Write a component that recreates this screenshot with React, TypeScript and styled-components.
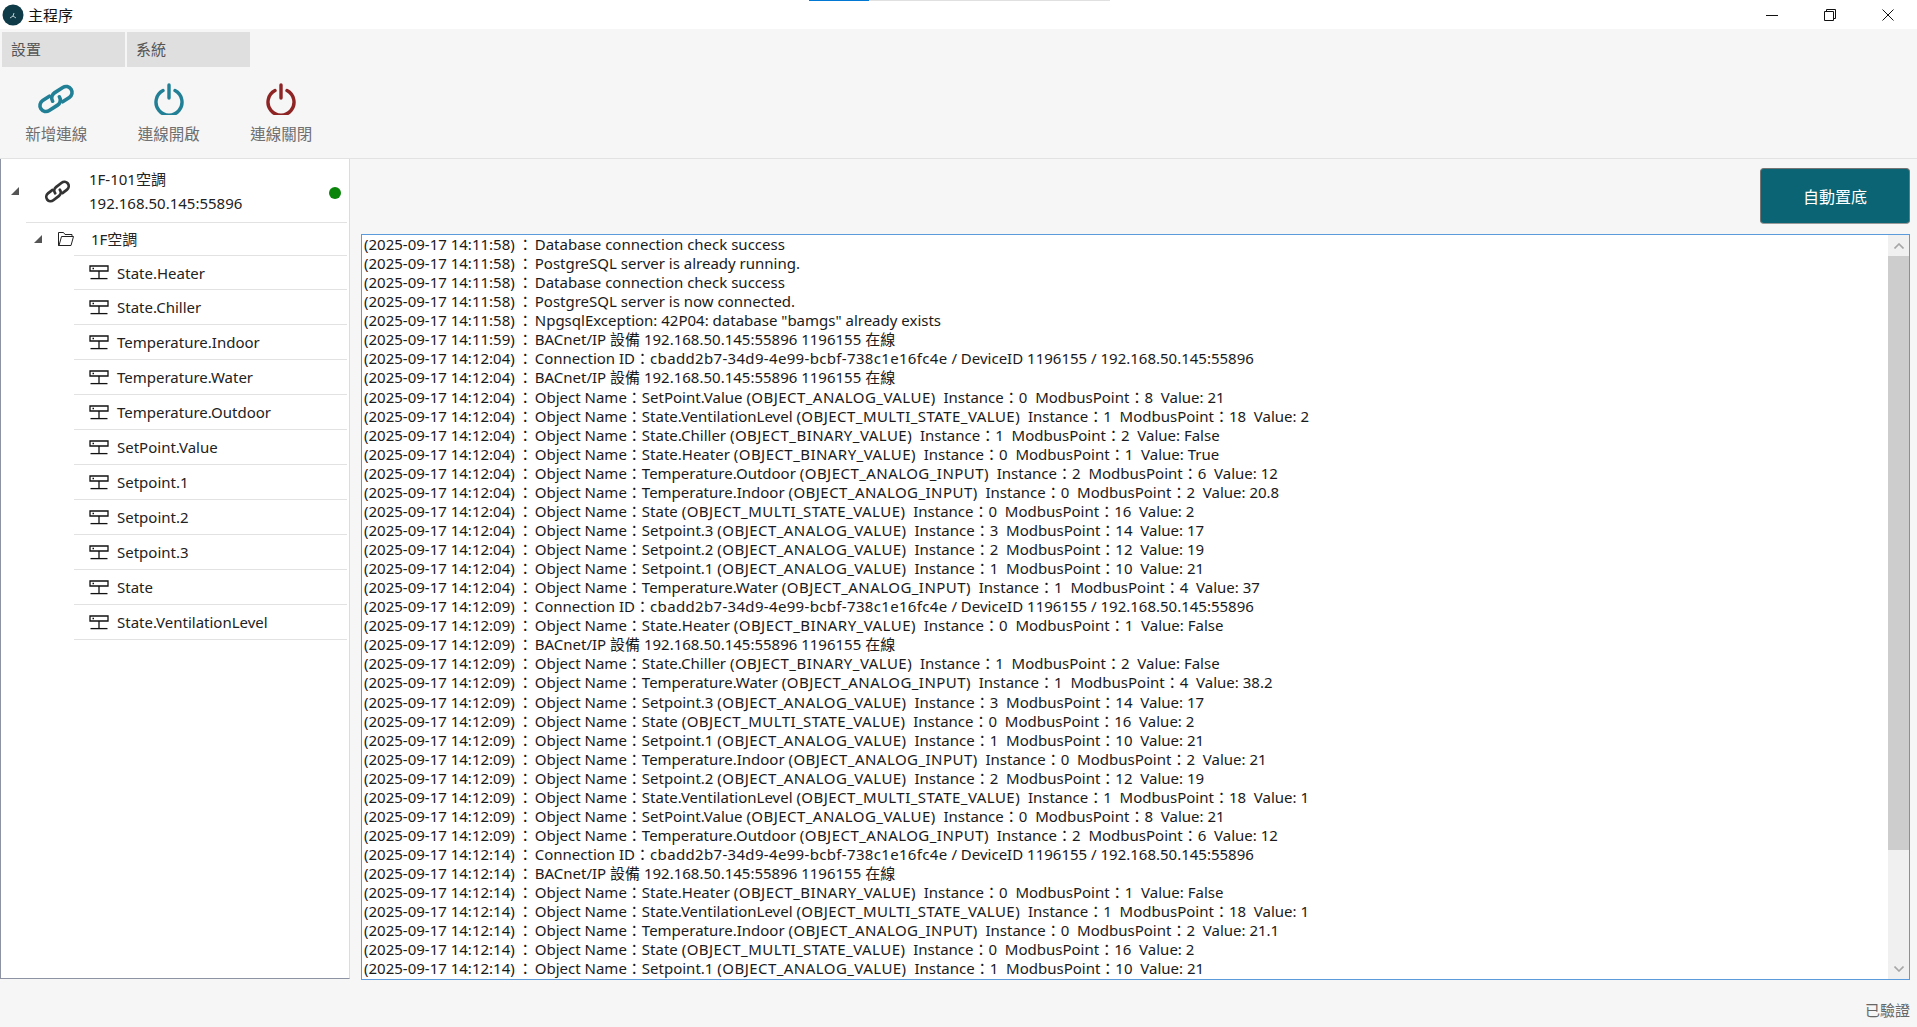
import { createGlobalStyle, styled } from "styled-components";

const GlobalStyle = createGlobalStyle`
  html, body {
    margin: 0;
    padding: 0;
    height: 100%;
    overflow: hidden;
    background: #f6f6f6;
    font-family: "Noto Sans", "Noto Sans CJK TC", sans-serif;
  }
`;

const treeItems = [
  "State.Heater",
  "State.Chiller",
  "Temperature.Indoor",
  "Temperature.Water",
  "Temperature.Outdoor",
  "SetPoint.Value",
  "Setpoint.1",
  "Setpoint.2",
  "Setpoint.3",
  "State",
  "State.VentilationLevel",
];

const conn = "Connection ID：cbadd2b7-34d9-4e99-bcbf-738c1e16fc4e / DeviceID 1196155 / 192.168.50.145:55896";
const online = (tail: string) => `BACnet/IP 設備 192.168.50.145:55896 1196155 ${tail}`;
const obj = (name: string, type: string, inst: number, point: number, value: string) =>
  `Object Name：${name} (OBJECT_${type})  Instance：${inst}  ModbusPoint：${point}  Value: ${value}`;

const logLines: [string, string][] = [
  ["14:11:58", "Database connection check success"],
  ["14:11:58", "PostgreSQL server is already running."],
  ["14:11:58", "Database connection check success"],
  ["14:11:58", "PostgreSQL server is now connected."],
  ["14:11:58", 'NpgsqlException: 42P04: database "bamgs" already exists'],
  ["14:11:59", online("在線")],
  ["14:12:04", conn],
  ["14:12:04", online("在線")],
  ["14:12:04", obj("SetPoint.Value", "ANALOG_VALUE", 0, 8, "21")],
  ["14:12:04", obj("State.VentilationLevel", "MULTI_STATE_VALUE", 1, 18, "2")],
  ["14:12:04", obj("State.Chiller", "BINARY_VALUE", 1, 2, "False")],
  ["14:12:04", obj("State.Heater", "BINARY_VALUE", 0, 1, "True")],
  ["14:12:04", obj("Temperature.Outdoor", "ANALOG_INPUT", 2, 6, "12")],
  ["14:12:04", obj("Temperature.Indoor", "ANALOG_INPUT", 0, 2, "20.8")],
  ["14:12:04", obj("State", "MULTI_STATE_VALUE", 0, 16, "2")],
  ["14:12:04", obj("Setpoint.3", "ANALOG_VALUE", 3, 14, "17")],
  ["14:12:04", obj("Setpoint.2", "ANALOG_VALUE", 2, 12, "19")],
  ["14:12:04", obj("Setpoint.1", "ANALOG_VALUE", 1, 10, "21")],
  ["14:12:04", obj("Temperature.Water", "ANALOG_INPUT", 1, 4, "37")],
  ["14:12:09", conn],
  ["14:12:09", obj("State.Heater", "BINARY_VALUE", 0, 1, "False")],
  ["14:12:09", online("在線")],
  ["14:12:09", obj("State.Chiller", "BINARY_VALUE", 1, 2, "False")],
  ["14:12:09", obj("Temperature.Water", "ANALOG_INPUT", 1, 4, "38.2")],
  ["14:12:09", obj("Setpoint.3", "ANALOG_VALUE", 3, 14, "17")],
  ["14:12:09", obj("State", "MULTI_STATE_VALUE", 0, 16, "2")],
  ["14:12:09", obj("Setpoint.1", "ANALOG_VALUE", 1, 10, "21")],
  ["14:12:09", obj("Temperature.Indoor", "ANALOG_INPUT", 0, 2, "21")],
  ["14:12:09", obj("Setpoint.2", "ANALOG_VALUE", 2, 12, "19")],
  ["14:12:09", obj("State.VentilationLevel", "MULTI_STATE_VALUE", 1, 18, "1")],
  ["14:12:09", obj("SetPoint.Value", "ANALOG_VALUE", 0, 8, "21")],
  ["14:12:09", obj("Temperature.Outdoor", "ANALOG_INPUT", 2, 6, "12")],
  ["14:12:14", conn],
  ["14:12:14", online("在線")],
  ["14:12:14", obj("State.Heater", "BINARY_VALUE", 0, 1, "False")],
  ["14:12:14", obj("State.VentilationLevel", "MULTI_STATE_VALUE", 1, 18, "1")],
  ["14:12:14", obj("Temperature.Indoor", "ANALOG_INPUT", 0, 2, "21.1")],
  ["14:12:14", obj("State", "MULTI_STATE_VALUE", 0, 16, "2")],
  ["14:12:14", obj("Setpoint.1", "ANALOG_VALUE", 1, 10, "21")],
];

// the object type and the connection guid run wider in the original font
const widePart = /(\(OBJECT_[A-Z_]+\)|[0-9a-f]{8}-[0-9a-f-]+)/;

const LinkIcon = ({ size, color, weight, angle }: { size: number; color: string; weight: number; angle: number }) => (
  <svg width={size} height={size} viewBox="0 0 40 40" fill="none" stroke={color} strokeWidth={weight} strokeLinecap="round">
    <g transform={`rotate(${angle} 20 20)`}>
      <path d="M16 14H8a6 6 0 0 0 0 12h10a6 6 0 0 0 6-6" />
      <path d="M24 26h8a6 6 0 0 0 0-12H22a6 6 0 0 0-6 6" />
    </g>
  </svg>
);

const PowerIcon = ({ color }: { color: string }) => (
  <svg width="32" height="32" viewBox="0 0 32 32" fill="none" stroke={color} strokeWidth="3.4" strokeLinecap="round">
    <path d="M10 7.6a13 13 0 1 0 12 0" />
    <path d="M16 2v13" />
  </svg>
);

const FolderIcon = () => (
  <svg width="18" height="16" viewBox="0 0 18 16" fill="none" stroke="#222" strokeWidth="1">
    <path d="M1.5 14.5V1.5h5l1.5 2h7v2" />
    <path d="M1.5 14.5h12.5l2.5-9h-12l-2.5 9z" />
  </svg>
);

const NodeIcon = () => (
  <svg width="20" height="15" viewBox="0 0 20 15" fill="none" stroke="#111" strokeWidth="1.3">
    <path d="M1 1h18v5H1z" />
    <path d="M3.5 3.5h1.5" />
    <path d="M10 6v7" />
    <path d="M1.5 13.6h17" />
  </svg>
);

const AppLogo = () => (
  <svg width="22" height="22" viewBox="0 0 22 22">
    <circle cx="11" cy="11" r="10.5" fill="#0f3a47" />
    <path d="M8 14l3-2 1-3M11 12l3 2" stroke="#cfe0e4" strokeWidth="0.9" fill="none" />
  </svg>
);

const Caret = () => (
  <svg width="8" height="8" viewBox="0 0 8 8">
    <path d="M8 0v8H0z" fill="#555" />
  </svg>
);

const Chevron = ({ up }: { up?: boolean }) => (
  <svg width="10" height="6" viewBox="0 0 10 6" fill="none" stroke="#a6a6a6" strokeWidth="1.6">
    <path d={up ? "M.5 5.5L5 1l4.5 4.5" : "M.5.5L5 5l4.5-4.5"} />
  </svg>
);

export default function App() {
  return (
    <Page>
      <GlobalStyle />
      <ShareBar>
        <ShareProgress />
      </ShareBar>
      <TitleBar>
        <AppLogo />
        <TitleText>主程序</TitleText>
        <WindowButtons>
          <WindowButton>
            <svg width="12" height="12" viewBox="0 0 12 12" stroke="#111" fill="none">
              <path d="M0 6.5h12" />
            </svg>
          </WindowButton>
          <WindowButton>
            <svg width="12" height="12" viewBox="0 0 12 12" stroke="#111" fill="none">
              <path d="M.5 2.5h9v9h-9z" />
              <path d="M2.5 2.5v-2h9v9h-2" />
            </svg>
          </WindowButton>
          <WindowButton>
            <svg width="12" height="12" viewBox="0 0 12 12" stroke="#111" fill="none">
              <path d="M.5.5l11 11M11.5.5l-11 11" />
            </svg>
          </WindowButton>
        </WindowButtons>
      </TitleBar>

      <MenuBar>
        <MenuTab>設置</MenuTab>
        <MenuTab>系統</MenuTab>
      </MenuBar>

      <Toolbar>
        <ToolButton>
          <ToolIcon>
            <LinkIcon size={40} color="#217f96" weight={3.6} angle={-33} />
          </ToolIcon>
          <ToolLabel>新增連線</ToolLabel>
        </ToolButton>
        <ToolButton>
          <ToolIcon>
            <PowerIcon color="#217f96" />
          </ToolIcon>
          <ToolLabel>連線開啟</ToolLabel>
        </ToolButton>
        <ToolButton>
          <ToolIcon>
            <PowerIcon color="#8e2424" />
          </ToolIcon>
          <ToolLabel>連線關閉</ToolLabel>
        </ToolButton>
      </Toolbar>

      <Main>
        <TreePanel>
          <RootRow>
            <CaretSlot>
              <Caret />
            </CaretSlot>
            <RootIconSlot>
              <LinkIcon size={29} color="#333" weight={3.8} angle={-38} />
            </RootIconSlot>
            <RootText>
              <span>1F-101空調</span>
              <span>192.168.50.145:55896</span>
            </RootText>
            <StatusDot />
          </RootRow>
          <FolderRow>
            <FolderCaret>
              <Caret />
            </FolderCaret>
            <FolderIcon />
            <FolderLabel>1F空調</FolderLabel>
          </FolderRow>
          {treeItems.map((item) => (
            <ItemRow key={item}>
              <NodeIcon />
              <ItemLabel>{item}</ItemLabel>
            </ItemRow>
          ))}
        </TreePanel>

        <RightPane>
          <ActionRow>
            <AutoScrollButton>自動置底</AutoScrollButton>
          </ActionRow>
          <LogBox>
            <LogText>
              {logLines.map(([time, text], i) => (
                <LogLine key={i}>
                  {`(2025-09-17 ${time})`}
                  <LeadColon>：</LeadColon>
                  {text.split(widePart).map((part, j) =>
                    j % 2 === 1 ? <WideText key={j} $guid={!part.startsWith("(")}>{part}</WideText> : part,
                  )}
                </LogLine>
              ))}
            </LogText>
            <ScrollTrack>
              <ScrollButton>
                <Chevron up />
              </ScrollButton>
              <ScrollThumb />
              <ScrollRest />
              <ScrollButton>
                <Chevron />
              </ScrollButton>
            </ScrollTrack>
          </LogBox>
        </RightPane>
      </Main>

      <StatusBar>已驗證</StatusBar>
    </Page>
  );
}

// Styles
const Page = styled.div`
  width: 1917px;
  height: 1027px;
  display: flex;
  flex-direction: column;
  background: #f6f6f6;
  overflow: hidden;
  position: relative;
`;

const ShareBar = styled.div`
  position: absolute;
  top: 0;
  left: 809px;
  width: 301px;
  height: 1px;
  background: #e0e0e0;
`;

const ShareProgress = styled.div`
  width: 60px;
  height: 1px;
  background: #0078d4;
`;

const TitleBar = styled.div`
  height: 29px;
  flex: none;
  display: flex;
  align-items: center;
  padding-left: 2px;
  background: #fff;
`;

const TitleText = styled.span`
  margin-left: 4px;
  font-size: 15px;
  color: #111;
`;

const WindowButtons = styled.div`
  margin-left: auto;
  display: flex;
`;

const WindowButton = styled.div`
  width: 58px;
  height: 29px;
  display: flex;
  align-items: center;
  justify-content: center;
`;

const MenuBar = styled.div`
  flex: none;
  display: flex;
  gap: 2px;
  height: 35px;
  margin-top: 3px;
  padding-left: 2px;
`;

const MenuTab = styled.div`
  width: 123px;
  display: flex;
  align-items: center;
  padding-left: 9px;
  padding-bottom: 2px;
  box-sizing: border-box;
  background: #dfdfdf;
  font-size: 15px;
  color: #555;
`;

const Toolbar = styled.div`
  flex: none;
  display: flex;
  height: 91px;
`;

const ToolButton = styled.div`
  width: 112.5px;
  display: flex;
  flex-direction: column;
  align-items: center;
  justify-content: flex-end;
  padding-bottom: 14px;
  box-sizing: border-box;
  gap: 9px;
`;

const ToolIcon = styled.div`
  height: 32px;
  display: flex;
  align-items: center;
  justify-content: center;
`;

const ToolLabel = styled.span`
  font-size: 15.5px;
  line-height: 20px;
  color: #6f6f6f;
`;

const Main = styled.div`
  flex: 1;
  min-height: 0;
  display: flex;
  border-top: 1px solid #e2e2e2;
`;

const TreePanel = styled.div`
  width: 350px;
  height: 820px;
  flex: none;
  box-sizing: border-box;
  background: #fff;
  border-left: 1px solid #8d93a3;
  border-bottom: 1px solid #8d93a3;
  border-right: 1px solid #dcdcdc;
`;

const RootRow = styled.div`
  height: 64px;
  display: flex;
  align-items: center;
  position: relative;
`;

const CaretSlot = styled.div`
  width: 25px;
  padding-left: 10px;
  box-sizing: border-box;
  display: flex;
`;

const RootIconSlot = styled.div`
  width: 62px;
  padding-left: 17px;
  box-sizing: border-box;
  display: flex;
`;

const RootText = styled.div`
  flex: 1;
  display: flex;
  flex-direction: column;
  font-size: 15px;
  line-height: 24px;
  color: #222;
  height: 63px;
  justify-content: center;
  border-bottom: 1px solid #e2e2e2;
  margin-left: -62px;
  padding-left: 63px;
  margin-right: 2px;
`;

const StatusDot = styled.div`
  position: absolute;
  right: 8px;
  top: 28px;
  width: 12px;
  height: 12px;
  border-radius: 50%;
  background: #0a840a;
`;

const FolderRow = styled.div`
  height: 32px;
  display: flex;
  align-items: center;
  margin-left: 33px;
`;

const FolderCaret = styled.div`
  width: 23px;
  display: flex;
`;

const FolderLabel = styled.span`
  margin-left: 16px;
  padding-bottom: 2px;
  font-size: 15px;
  color: #222;
`;

const ItemRow = styled.div`
  height: 35px;
  box-sizing: border-box;
  margin-left: 73px;
  margin-right: 2px;
  padding-left: 15px;
  display: flex;
  align-items: center;
  border-top: 1px solid #e2e2e2;
  &:nth-child(3) {
    height: 34px;
  }
  &:last-child {
    border-bottom: 1px solid #e2e2e2;
    height: 36px;
  }
`;

const ItemLabel = styled.span`
  margin-left: 8px;
  font-size: 15px;
  color: #222;
`;

const RightPane = styled.div`
  flex: 1;
  min-width: 0;
  display: flex;
  flex-direction: column;
  padding: 0 7px 0 11px;
`;

const ActionRow = styled.div`
  height: 75px;
  flex: none;
  display: flex;
  justify-content: flex-end;
  align-items: flex-start;
  padding-top: 9px;
  box-sizing: border-box;
`;

const AutoScrollButton = styled.div`
  width: 150px;
  height: 56px;
  box-sizing: border-box;
  display: flex;
  align-items: center;
  justify-content: center;
  background: #0a6473;
  border: 1px solid #757575;
  border-bottom-color: #9a9a9a;
  border-radius: 4px;
  color: #fff;
  font-size: 16px;
`;

const LogBox = styled.div`
  height: 746px;
  flex: none;
  box-sizing: border-box;
  display: flex;
  border: 1px solid #5b9bdc;
  background: #fff;
`;

const LogText = styled.div`
  flex: 1;
  min-width: 0;
  overflow: hidden;
  padding: 0 0 0 2px;
`;

const LogLine = styled.div`
  font-size: 15px;
  line-height: 19.07px;
  color: #1a1a1a;
  white-space: pre;
`;

const LeadColon = styled.span`
  margin: 0 2px 0 3px;
`;

const WideText = styled.span<{ $guid: boolean }>`
  letter-spacing: ${(p) => (p.$guid ? "0.33px" : "0.45px")};
`;

const ScrollTrack = styled.div`
  width: 21px;
  flex: none;
  display: flex;
  flex-direction: column;
  background: #f0f0f0;
`;

const ScrollButton = styled.div`
  height: 21px;
  flex: none;
  display: flex;
  align-items: center;
  justify-content: center;
`;

const ScrollThumb = styled.div`
  height: 594px;
  flex: none;
  background: #cdcdcd;
`;

const ScrollRest = styled.div`
  flex: 1;
`;

const StatusBar = styled.div`
  position: absolute;
  right: 7px;
  bottom: 7px;
  font-size: 15px;
  color: #666;
`;
